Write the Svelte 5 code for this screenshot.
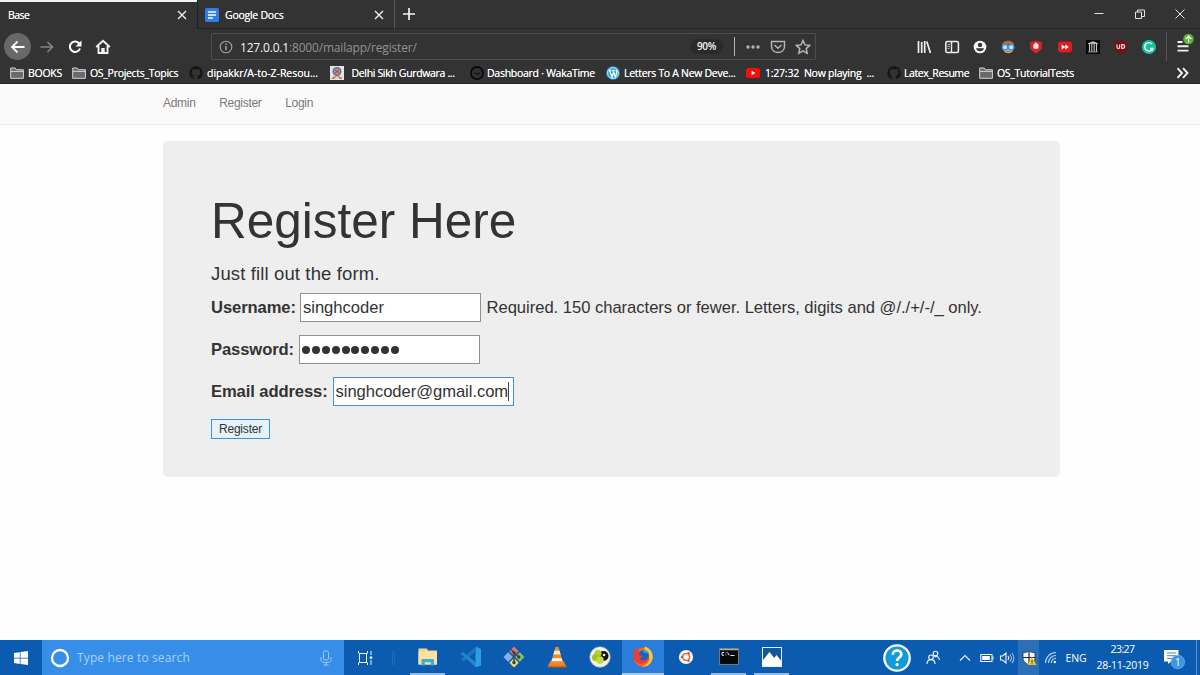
<script>
  const bookmarks = [
    { icon: 'folder', text: 'BOOKS', gap: 4, ls: -0.25 },
    { icon: 'folder', text: 'OS_Projects_Topics', gap: 4, ls: -0.3 },
    { icon: 'github', text: 'dipakkr/A-to-Z-Resou...', gap: 4, ls: -0.03 },
    { icon: 'sikh', text: 'Delhi Sikh Gurdwara ...', gap: 8, ls: -0.34 },
    { icon: 'waka', text: 'Dashboard · WakaTime', gap: 3, ls: -0.27 },
    { icon: 'wp', text: 'Letters To A New Deve...', gap: 4, ls: -0.3 },
    { icon: 'yt', text: '1:27:32  Now playing  ...', gap: 5, ls: -0.23 },
    { icon: 'github', text: 'Latex_Resume', gap: 3, ls: -0.45 },
    { icon: 'folder', text: 'OS_TutorialTests', gap: 4, ls: -0.3 }
  ];
  const tools = ['library', 'sidebar', 'account', 'face', 'shield', 'forward', 'archive', 'ublock', 'grammar'];
  const apps = [
    { icon: 'explorer', open: true },
    { icon: 'code' },
    { icon: 'git' },
    { icon: 'vlc' },
    { icon: 'eye' },
    { icon: 'firefox', active: true },
    { icon: 'ubuntu' },
    { icon: 'terminal', open: true },
    { icon: 'photos', open: true }
  ];
</script>

{#snippet bookmarkIcon(name)}
  <svg width="14" height="14" viewBox="0 0 14 14">
    {#if name === 'folder'}
      <path d="M.7 12.300V2h4.500l1 1.700h7.200v8.600z" fill="#69696b" stroke="#d4d4d4" />
      <path d="M1 5.400h12.200" stroke="#d4d4d4" />
    {:else if name === 'github'}
      <path d="M7 .3a6.700 6.700 0 0 0-2.200 13c.4.1.5-.1.5-.3v-1.300c-1.900.4-2.300-.8-2.300-.8-.3-.8-.7-1-.7-1-.6-.4 0-.4 0-.4.7 0 1 .7 1 .7.6 1.100 1.600.8 2 .6 0-.5.2-.8.4-.9-1.500-.2-3-.8-3-3.400 0-.7.2-1.300.6-1.800 0-.2-.3-.9.1-1.800 0 0 .6-.2 1.900.7a6 6 0 0 1 3.400 0c1.300-.9 1.900-.7 1.900-.7.4.9.1 1.600.1 1.800.4.5.6 1.100.6 1.800 0 2.600-1.500 3.200-3 3.400.2.2.5.6.5 1.300V13c0 .2.1.4.5.3A6.700 6.700 0 0 0 7 .3z" fill="#161617" />
    {:else if name === 'sikh'}
      <rect width="14" height="14" fill="#e6e3e3" />
      <circle cx="7" cy="5.500" r="4.500" fill="#4d73b8" />
      <circle cx="7" cy="5.500" r="3" fill="#d98b62" />
      <path d="M5 4l4 3M9 4L5 7" stroke="#934a3e" />
      <path d="M1.500 13c1-4 10-4 11 0z" fill="#c7765d" />
      <path d="M4 13l3-3 3 3z" fill="#e7d4bd" />
    {:else if name === 'waka'}
      <circle cx="7" cy="7" r="6.100" fill="#303031" stroke="#080808" stroke-width="1.700" />
      <path d="M4 6.500l1.700 1.900L7 7l1.200 1.400L10.500 5.500" fill="none" stroke="#0b0b0b" />
    {:else if name === 'wp'}
      <circle cx="7" cy="7" r="6.800" fill="#21a1df" />
      <circle cx="7" cy="7" r="5.400" fill="none" stroke="#e9f6fd" stroke-width=".8" />
      <path d="M2.700 4.300h2.700M6 4.300h3M3.500 4.500L6 11 7.500 6.500M7 4.500L9.300 11l1.600-5-1-2" fill="none" stroke="#fff" stroke-width="1.300" />
    {:else if name === 'yt'}
      <rect y="2" width="14" height="10" rx="2.500" fill="#f80d08" />
      <path d="M5.600 4.700L9.400 7 5.600 9.300z" fill="#fff" />
    {/if}
  </svg>
{/snippet}

{#snippet toolIcon(name)}
  <svg width="16" height="16" viewBox="0 0 16 16">
    {#if name === 'library'}
      <path d="M2.500 2v12M5.700 3v11M8.700 2v12M10.800 2.500l3.600 11.500" stroke="#efefef" stroke-width="1.700" />
    {:else if name === 'sidebar'}
      <rect x="1.800" y="2.500" width="12.600" height="11" rx="1.600" fill="none" stroke="#ededed" stroke-width="1.600" />
      <path d="M7.500 3v10" stroke="#ededed" stroke-width="1.400" />
      <path d="M3.500 5.400h2.500M3.500 7.400h2.500M3.500 9.400h2" stroke="#ccc" stroke-width=".9" />
    {:else if name === 'account'}
      <circle cx="8" cy="8" r="6.300" fill="#f4f4f4" />
      <circle cx="8" cy="5.900" r="2.200" fill="#333" />
      <path d="M4 9.300h8c-.6 3.900-7.400 3.900-8 0z" fill="#333" />
    {:else if name === 'face'}
      <path d="M3 6h10.500l-.6 5.500c-1.300 3.700-8 3.700-9.300 0z" fill="#dda565" />
      <path d="M2.300 6.500C1.500.3 14.700.3 13.900 6.500l-3-1.500-4 .6z" fill="#a8703a" />
      <circle cx="5" cy="8.200" r="2.700" fill="#c5e6fc" stroke="#3f92dd" stroke-width="1.400" />
      <circle cx="11.200" cy="8.200" r="2.700" fill="#c5e6fc" stroke="#3f92dd" stroke-width="1.400" />
      <path d="M6.500 12.500h3.200" stroke="#9d5e38" stroke-width=".8" />
    {:else if name === 'shield'}
      <path d="M8 1.800l5.900 1.500v4.200c0 3.200-3.100 5.300-5.900 6.900-2.800-1.600-5.900-3.700-5.900-6.900V3.300z" fill="#dc232b" />
      <path d="M5.200 5.600h1V4.300h1v-.7h1.200v.7h1v.8h1.100v4L9.600 10H6.800L5.200 8.800z" fill="#fbdedd" />
    {:else if name === 'forward'}
      <rect x="1" y="2.500" width="14" height="11" rx="3" fill="#dc1d24" />
      <path d="M4.700 5.500l3.600 2.500-3.600 2.500zM8.300 5.500l3.600 2.500-3.600 2.500z" fill="#fff" />
    {:else if name === 'archive'}
      <rect x="1" y="1" width="14" height="14" fill="#080808" />
      <path d="M3.200 4.600L8 2.700l4.800 1.900zM3.200 12.900h9.600" stroke="#ccc" fill="#ccc" stroke-width=".8" />
      <path d="M4.500 5v7.500M6.800 5v7.500M9.200 5v7.500M11.500 5v7.500" stroke="#c5c5c5" stroke-width="1.100" />
    {:else if name === 'ublock'}
      <path d="M8 .9c2 1.500 4.200 1.700 6.300 1.800v4.900c0 3.700-3.200 5.700-6.300 7.300-3.100-1.600-6.300-3.600-6.300-7.300V2.700C3.800 2.600 6 2.400 8 .9z" fill="#7f0d12" />
      <path d="M4 5.500v2.500q0 1.500 1.300 1.500T6.600 8V5.500M8.700 5.700v3.700h1c2.600 0 2.600-3.700 0-3.700z" fill="none" stroke="#f1dfe0" stroke-width="1.200" />
    {:else if name === 'grammar'}
      <circle cx="8" cy="8" r="7.100" fill="#15c39a" />
      <path d="M11 5A4.200 4.200 0 1 0 11.800 9.500H9M11.600 9v2.500" fill="none" stroke="#fff" stroke-width="1.400" />
    {/if}
  </svg>
{/snippet}

{#snippet appIcon(name)}
  <svg width="24" height="24" viewBox="0 0 24 24">
    {#if name === 'explorer'}
      <path d="M2.500 3.500h8.500l1 2h9v14H2.500z" fill="#f2d88a" />
      <path d="M2.500 6.500H21v13H2.500z" fill="#fbe49a" />
      <path d="M5.500 20.500V14H18v6.500h-3.200v-3.200H8.700v3.200z" fill="#3cacdc" />
    {:else if name === 'code'}
      <path d="M16.500 1.500L22 4v16.500L16.500 22.500z" fill="#2ba0e0" />
      <path d="M17 6.500L4.500 16.500 1.500 14.500 17 2z" fill="#1879bd" />
      <path d="M17 17.500L4 7 1.500 8.500 17 22.500z" fill="#1c8ace" />
    {:else if name === 'git'}
      <path d="M12 1.500l4.700 4.700L12 10.900 7.300 6.200z" fill="#e9736a" />
      <path d="M6.200 7.300l4.700 4.700-4.700 4.700L1.500 12z" fill="#86b1ea" />
      <path d="M17.800 7.300l4.700 4.700-4.700 4.700-4.700-4.700z" fill="#83c562" />
      <path d="M12 13.100l4.700 4.700-4.700 4.700-4.700-4.700z" fill="#f4d964" />
      <path d="M8.500 4l3.500 3.500v10M12 8l5 4" fill="none" stroke="#464d54" stroke-width="1.600" />
      <circle cx="12" cy="7.500" r="1.600" fill="#3a3f45" /><circle cx="16.800" cy="12" r="1.700" fill="#3a3f45" /><circle cx="12" cy="17.500" r="1.700" fill="#3a3f45" />
    {:else if name === 'vlc'}
      <path d="M5.500 16h13l3 6H2.500z" fill="#ee8220" />
      <path d="M10.500 2h3L18 17.500c-2 2-10 2-12 0z" fill="#f18a27" />
      <path d="M9.500 5.800h5l1.100 3.700H8.400zM7.300 13.200h9.400l.9 3H6.400z" fill="#f1f1ee" />
      <path d="M3 21h18v1.500H3z" fill="#c96310" />
    {:else if name === 'eye'}
      <circle cx="12" cy="12" r="10.300" fill="#eff0e9" stroke="#aaa" stroke-width=".6" />
      <circle cx="15.500" cy="11" r="5" fill="#141512" />
      <circle cx="10" cy="8.500" r="3.500" fill="#b9cf26" />
      <circle cx="7.500" cy="12.500" r="3.500" fill="#a9c01b" />
      <circle cx="12" cy="15" r="3.700" fill="#c4d83a" />
      <circle cx="16" cy="10" r="1.300" fill="#fff" />
    {:else if name === 'firefox'}
      <circle cx="12" cy="12.300" r="9.500" fill="#f2652c" />
      <path d="M14 1.500c6 2 9.500 8.500 7 14-2 4.600-6.500 6.700-10 6.200 7-2 9-8 5-13-2-2.300-3.500-4-2-7.200z" fill="#fbc833" />
      <circle cx="12.500" cy="10.700" r="5.500" fill="#1b63bb" />
      <path d="M3.800 4C6 4.700 8 5 9.500 7c-2.200 1.300-1.500 3-.2 3.500l2.600.5c-.7 2-2.600 1.600-3.200 2.200 1.700 3 6.300 2.600 8.800-.4 0 6.500-12 9.400-14.700.5C2 10 2.500 6.500 3.800 4z" fill="#ea3e38" />
      <path d="M12 5c3.500-.6 5.600 1.400 6 4.600-1.600-1.600-3.700-1.700-5-1.500z" fill="#2d9edb" />
    {:else if name === 'ubuntu'}
      <circle cx="12" cy="12" r="7.100" fill="#f7f7f5" />
      <circle cx="12.200" cy="12" r="3.400" fill="none" stroke="#d0664a" stroke-width="1.400" />
      <path d="M12.200 12L7.800 12M12.200 12l2.500-4M12.200 12l2.500 4" stroke="#f7f7f5" stroke-width=".8" />
      <circle cx="8" cy="12" r="1.200" fill="#c75636" /><circle cx="14.500" cy="8.200" r="1.200" fill="#c75636" /><circle cx="14.500" cy="15.800" r="1.200" fill="#c75636" />
    {:else if name === 'terminal'}
      <rect x="2.500" y="3.500" width="19" height="16" fill="#070808" stroke="#6f777d" />
      <path d="M3 4.500h18" stroke="#a9b0b5" stroke-width="1.500" />
      <path d="M7 7.500H5v2.700h2M9 7.500v.8M9 9.500v.8M10.500 7.300l1.700 3M13.500 10.500h4" fill="none" stroke="#e8e8e8" />
    {:else if name === 'photos'}
      <rect x="2.500" y="2.500" width="19" height="19" fill="#14569b" stroke="#e6f0fa" />
      <path d="M3 20v-5l6.500-8 4.700 6 2.300-3L21 15.500V21H3z" fill="#fff" />
    {/if}
  </svg>
{/snippet}

<div class="screen">
  <header class="browser">
    <div class="tabs">
      <div class="tab active"><span class="title base">Base</span><svg class="x" width="10" height="10" viewBox="0 0 10 10"><path d="M1 1l8 8M9 1L1 9" /></svg></div>
      <div class="tab second">
        <svg width="14" height="14" viewBox="0 0 14 14"><rect width="14" height="14" rx="1.500" fill="#2f7de9" /><path d="M3 4h8M3 7h8M3 10h5" stroke="#fff" stroke-width="1.500" /></svg>
        <span class="title docs">Google Docs</span>
        <svg class="x" width="10" height="10" viewBox="0 0 10 10"><path d="M1 1l8 8M9 1L1 9" /></svg>
      </div>
      <div class="plus"><svg width="14" height="14" viewBox="0 0 14 14"><path d="M7 1v12M1 7h12" stroke="#f3f3f3" stroke-width="1.700" /></svg></div>
      <div class="window-buttons">
        <svg width="12" height="12" viewBox="0 0 12 12"><path d="M1.500 5.500h9" /></svg>
        <svg width="12" height="12" viewBox="0 0 12 12"><path d="M1.500 4h6v6.500h-6zM3.500 4V2h7v6.500h-3" /></svg>
        <svg width="12" height="12" viewBox="0 0 12 12"><path d="M1.500 1.500l9 9M10.500 1.500l-9 9" /></svg>
      </div>
    </div>
    <div class="nav">
      <div class="nav-buttons">
        <div class="back"><svg width="16" height="16" viewBox="0 0 16 16"><path d="M14.500 8H2M7.500 2.500L2 8l5.500 5.500" fill="none" stroke="#fff" stroke-width="1.800" /></svg></div>
        <svg width="16" height="16" viewBox="0 0 16 16"><path d="M1.500 8h12M8.500 3l5 5-5 5" fill="none" stroke="#858586" stroke-width="1.600" /></svg>
        <svg width="16" height="16" viewBox="0 0 16 16"><path d="M12.300 4.700A5.200 5.200 0 1 0 13 9.500" fill="none" stroke="#fff" stroke-width="2" /><path d="M14.500 1.500v6h-6z" fill="#fff" /></svg>
        <svg width="16" height="16" viewBox="0 0 16 16"><path d="M1.200 8L8 1.700 14.800 8M3.500 7v7h9V7" fill="none" stroke="#f2f2f2" stroke-width="1.900" /><path d="M6.300 14V9h3.400v5z" fill="#f2f2f2" /></svg>
      </div>
      <div class="address">
        <svg width="14" height="14" viewBox="0 0 14 14"><circle cx="7" cy="7" r="5.800" fill="none" stroke="#a5a5a6" stroke-width="1.100" /><path d="M7 6v4.300M7 3.500V5" stroke="#b5b5b6" stroke-width="1.300" /></svg>
        <span class="url"><b>127.0.0.1</b>:8000/mailapp/register/</span>
        <span class="zoom">90%</span>
        <i class="bar"></i>
        <svg class="dots" width="16" height="16" viewBox="0 0 16 16"><circle cx="3" cy="8" r="1.700" /><circle cx="8" cy="8" r="1.700" /><circle cx="13" cy="8" r="1.700" /></svg>
        <svg class="pocket" width="16" height="16" viewBox="0 0 16 16"><path d="M1.500 2.500h13v4.700c0 8.300-13 8.300-13 0zM4.500 6L8 9.300 11.500 6" /></svg>
        <svg class="star" width="16" height="16" viewBox="0 0 16 16"><path d="M8 1.500l2 4.400 4.700.5-3.500 3.200 1 4.700L8 11.900l-4.200 2.400 1-4.700L1.300 6.400 6 5.900z" /></svg>
      </div>
      <div class="tools">
        {#each tools as tool}<div class="tool">{@render toolIcon(tool)}</div>{/each}
      </div>
      <div class="menu"><svg width="20" height="24" viewBox="0 0 20 24"><path d="M2.500 11h5M2.500 15.300h11M2.500 19.600h11" stroke="#f0f0f0" stroke-width="1.900" /><circle cx="13.500" cy="8" r="5.300" fill="#58b530" /><path d="M13.500 11.500V5.500M10.700 8l2.800-2.800L16.300 8" fill="none" stroke="#fff" stroke-width="1.300" /></svg></div>
    </div>
    <div class="bookmarks">
      {#each bookmarks as item}
        <div class="bookmark" style:gap="{item.gap}px">{@render bookmarkIcon(item.icon)}<span style:letter-spacing="{item.ls}px">{item.text}</span></div>
      {/each}
      <svg class="more" width="13" height="12" viewBox="0 0 13 12"><path d="M1.500 1.200L6 6l-4.500 4.800M7 1.200L11.500 6 7 10.800" fill="none" stroke="#f1f1f1" stroke-width="1.900" /></svg>
    </div>
  </header>

  <nav class="site-nav"><span>Admin</span><span>Register</span><span>Login</span></nav>

  <main>
    <section class="jumbotron">
      <h1>Register Here</h1>
      <h2>Just fill out the form.</h2>
      <div class="row user"><label for="user">Username:</label><div class="field" id="user"><span>singhcoder</span></div><span class="help">Required. 150 characters or fewer. Letters, digits and @/./+/-/_ only.</span></div>
      <div class="row pass"><label for="pass">Password:</label><div class="field" id="pass">{#each Array(10) as _}<i class="dot"></i>{/each}</div></div>
      <div class="row mail"><label for="mail">Email address:</label><div class="field focus" id="mail"><span>singhcoder@gmail.com</span><i class="caret"></i></div></div>
      <button>Register</button>
    </section>
  </main>

  <footer class="taskbar">
    <div class="cell"><svg width="16" height="16" viewBox="0 0 16 16"><path d="M1 3l5.800-.8v5.500H1zM7.500 2.100L15 1v6.700H7.500zM1 8.400h5.800v5.500L1 13.100zM7.500 8.400H15v6.700l-7.500-1.100z" fill="#fff" /></svg></div>
    <div class="search">
      <svg width="20" height="20" viewBox="0 0 20 20"><circle cx="10" cy="10" r="8" fill="none" stroke="#fff" stroke-width="2.300" /></svg>
      <span>Type here to search</span>
      <svg class="mic" width="12" height="16" viewBox="0 0 12 16"><rect x="3.500" y="1" width="5" height="9" rx="1.500" /><path d="M1 7v3.500l2 2h6l2-2V7M6 12.500V15M3.500 15h5" /></svg>
    </div>
    <div class="cell"><svg width="16" height="16" viewBox="0 0 16 16"><path d="M1.500 1v2M10.500 1v2M1.500 3.500h9M1.500 12.500h9M2.500 3.500v9M9.500 3.500v9M1.500 13v2M10.500 13v2M14 1v4M14 10v5" stroke="#edf5fc" fill="none" /><path d="M14 6.500v2.200" stroke="#fff" stroke-width="2.400" /></svg></div>
    <div class="grip"><i></i><i></i></div>
    <div class="apps">
      {#each apps as app}<div class="app" class:open={app.open} class:active={app.active}>{@render appIcon(app.icon)}</div>{/each}
    </div>
    <div></div>
    <div class="cell"><svg width="30" height="30" viewBox="0 0 30 30"><circle cx="15" cy="15" r="12.700" fill="#129bdb" stroke="#fff" stroke-width="2.300" /><path d="M10.800 11.700c.1-5.600 8.700-5.500 8.500-.3-.1 3.200-4.200 3-4.200 6.600" fill="none" stroke="#fff" stroke-width="2.700" /><circle cx="15.100" cy="21.600" r="1.700" fill="#fff" /></svg></div>
    <div class="cell"><svg class="line" width="16" height="16" viewBox="0 0 16 16"><circle cx="10.500" cy="3.500" r="2.300" /><circle cx="6" cy="7.300" r="2.300" /><path d="M2 14c0-5.800 8-5.800 8 0M9.300 7c2.700-1.700 5 .5 5 3" /></svg></div>
    <div class="cell"><svg class="line" width="12" height="12" viewBox="0 0 12 12"><path d="M1 8.500l5-5 5 5" /></svg></div>
    <div class="cell"><svg width="14" height="10" viewBox="0 0 14 10"><rect x=".8" y="1.500" width="11.200" height="7" fill="none" stroke="#fff" /><path d="M2.200 3h7.600v4H2.200zM12.500 3.500h1v3h-1z" fill="#fff" /></svg></div>
    <div class="cell sound"><svg class="line" width="16" height="14" viewBox="0 0 16 14"><path d="M1.500 5h2.200L7 2v10L3.700 9H1.500zM9 5q1.500 2 0 4" /><path d="M10.900 3.500q3 3.500 0 7M12.900 2q4 5 0 10" opacity=".65" /></svg></div>
    <div class="cell defender"><svg width="16" height="18" viewBox="0 0 16 18"><path d="M8 2c2 1.300 4 1.700 6 1.700V9c0 3.500-3 5.600-6 7-3-1.400-6-3.500-6-7V3.700C4 3.700 6 3.300 8 2z" fill="#f6f6f6" stroke="#222" stroke-width=".7" /><path d="M8 2.500v13M2 8.500h12" stroke="#222b36" stroke-width="1.200" /><path d="M11 8l4.500 8h-9z" fill="#f8c32a" /><path d="M11 11v2.500M11 14.300v1" stroke="#5d3d03" /></svg></div>
    <div class="cell"><svg class="line" width="14" height="14" viewBox="0 0 14 14"><g opacity=".8"><path d="M1.500 12A10.500 10.500 0 0 1 12 1.500M4.500 12A7.500 7.500 0 0 1 12 4.500M7.300 12A4.700 4.700 0 0 1 12 7.300" /></g><circle cx="10.800" cy="11" r="1.200" fill="#fff" stroke="none" /></svg></div>
    <div class="cell lang">ENG</div>
    <div class="clock"><span class="time">23:27</span><span class="date">28-11-2019</span></div>
    <div class="cell"><svg width="24" height="24" viewBox="0 0 24 24"><path d="M1 4h14.500v11.500H8L5 18v-2.500H1z" fill="#fff" /><path d="M4 7h9M4 9.700h9M4 12.400h5" stroke="#4b81b9" /><circle cx="14.800" cy="16" r="6.800" fill="#3c95e5" stroke="#74b5ee" stroke-width=".7" /><text x="14.800" y="19.700" text-anchor="middle" font-size="10.500" fill="#fff" font-family="Open Sans, sans-serif">1</text></svg></div>
    <div class="edge"></div>
  </footer>
</div>

<style>
  :global(body) { margin: 0; overflow: hidden; background: #fff; }
  .screen { width: 1200px; height: 675px; display: grid; grid-template-rows: 84px 41px 515px 35px; background: #fefefe; font-family: "Open Sans", sans-serif; color: #333; }
  svg { display: block; flex: none; }
  .browser { display: grid; grid-template-rows: 29px 35px 18px; background: #333334; color: #f4f4f4; box-sizing: border-box; border-bottom: 1px solid #252525; overflow: hidden; }
  .tabs { display: grid; grid-template-columns: 197px 198px 28px 1fr; }
  .tab { display: flex; align-items: center; box-sizing: border-box; }
  .active.tab { border-top: 2px solid #f2f2f2; padding: 0 10px 1px 8px; justify-content: space-between; }
  .second { padding: 1px 10px 0 7px; border: solid #202021; border-width: 0 1px 1px; border-right-color: #58585a; }
  .second .title { margin-left: 6px; flex: 1; }
  .title { font-size: 10.500px; letter-spacing: -.25px; white-space: nowrap; text-shadow: 0 0 .4px #fff; }
  .base { letter-spacing: -.5px; }
  .x path { fill: none; stroke: #eee; stroke-width: 1.400; }
  .plus { display: flex; align-items: center; justify-content: center; border-bottom: 1px solid #262627; }
  .window-buttons { display: flex; justify-content: flex-end; align-items: center; gap: 28.500px; padding-right: 14px; border-bottom: 1px solid #262627; }
  .window-buttons path { fill: none; stroke: #e3e3e3; stroke-width: 1; }
  .nav { display: grid; grid-template-columns: 211px 605px 94px 256px 34px; align-items: center; }
  .nav-buttons { display: flex; align-items: center; gap: 12px; padding-left: 4px; }
  .back { width: 27px; height: 27px; border-radius: 50%; background: #68686a; display: flex; align-items: center; justify-content: center; margin-right: -4px; }
  .address { height: 27px; box-sizing: border-box; border: 1px solid #4c4c4e; border-radius: 1px; display: flex; align-items: center; padding: 0 4px 0 7px; }
  .url { flex: 1; margin: 1px 0 0 7px; font-size: 12px; letter-spacing: -.18px; color: #929293; }
  .url b { font-weight: 400; color: #f5f5f5; }
  .zoom { width: 33px; height: 15px; line-height: 15px; text-align: center; border-radius: 8px; background: #2a2a2b; font-size: 10px; letter-spacing: -.3px; font-weight: 600; }
  .bar { width: 1px; height: 19px; background: #b5b5b5; margin: 0 10px 0 11px; }
  .address .dots { fill: #b5b5b6; }
  .pocket, .star { margin-left: 9px; fill: none; stroke: #b5b5b6; stroke-width: 1.500; }
  .tools { grid-column: 4; display: flex; height: 29px; align-items: center; border-right: 1px solid #555557; margin-right: -1px; }
  .tool { width: 28.120px; display: flex; justify-content: center; flex: none; }
  .menu { grid-column: 5; padding-left: 9px; margin-top: -7px; }
  .bookmarks { display: grid; grid-template-columns: 62px 117px 140.500px 140.500px 136px 140px 141px 92px 197px 1fr; padding-left: 10px; align-items: center; }
  .bookmark { display: flex; align-items: center; height: 18px; }
  .bookmark span { font-size: 10.500px; line-height: 16px; white-space: pre; text-shadow: 0 0 .4px #fff; }
  .site-nav { background: #fafafa; border-bottom: 1px solid #e9e9e9; box-sizing: border-box; display: flex; gap: 23.700px; padding: 12px 0 0 163px; font: 12px/15px "Liberation Sans", sans-serif; letter-spacing: -.3px; color: #7b7b7b; }
  main { padding: 16px 140px 0 163px; font-family: "Liberation Sans", sans-serif; }
  .jumbotron { height: 336px; box-sizing: border-box; background: #eee; border-radius: 5px; padding: 52px 0 0 48px; }
  h1 { margin: 0; font-size: 49.500px; line-height: 56px; font-weight: 400; }
  h2 { margin: 14px 0 8px; font-size: 18.500px; line-height: 22px; font-weight: 400; letter-spacing: .13px; }
  .row { display: flex; align-items: center; height: 29px; margin-bottom: 13px; font-size: 16.600px; letter-spacing: -.03px; white-space: nowrap; }
  label { font-weight: 700; letter-spacing: -.1px; }
  .user label { width: 89px; }
  .pass label { width: 87.500px; }
  .mail label { width: 122px; }
  .field { width: 181px; height: 29px; box-sizing: border-box; border: 1px solid #919191; background: #fff; display: flex; align-items: center; padding-left: 2px; }
  .field.focus { border-color: #4a90d9; padding-left: 1.500px; letter-spacing: -.05px; }
  .help { margin-left: 5.500px; }
  .dot { width: 8px; height: 8px; border-radius: 50%; background: #333; margin: 1px 1.400px 0 .5px; }
  .caret { width: 1px; height: 19px; background: #444; }
  button { display: block; box-sizing: border-box; width: 59px; height: 20px; margin: 0; padding: 0; font: 12px/16px "Liberation Sans", sans-serif; letter-spacing: -.2px; color: #333; background: #e5f1fb; border: 1px solid #3995df; }
  .taskbar { display: grid; grid-template-columns: 42px 302px 42px 20px 387px 89px 30px 42px 22px 22px 20px 21px 24px 26px 67px 38px 1fr; background: #0b5cb1; color: #fff; }
  .cell { display: flex; align-items: center; justify-content: center; }
  .sound { padding-right: 2px; }
  .search { background: #378ee8; display: flex; align-items: center; padding: 0 12px 0 8px; font-size: 12px; color: #a9d2fa; }
  .search span { flex: 1; margin-left: 7px; letter-spacing: .13px; }
  .mic { fill: none; stroke: #9cc9f5; stroke-width: 1; }
  .grip { display: flex; align-items: center; gap: 1px; padding-left: 6px; }
  .grip i { width: 1px; height: 14px; background: #2469b6; }
  .apps { display: grid; grid-template-columns: repeat(9, 43px); }
  .app { display: flex; align-items: center; justify-content: center; border-bottom: 2px solid transparent; box-sizing: border-box; }
  .app svg { margin-top: 1px; }
  .app.open { margin: 0 4px; border-color: #8bbdf0; }
  .app.active { background: #2a7ed9; border-color: #9dccf7; margin-left: 1px; }
  .line { fill: none; stroke: #eef5fc; stroke-width: 1.100; }
  .defender { background: #2a6fb7; }
  .lang { font-size: 10.500px; letter-spacing: -.2px; }
  .clock { display: flex; flex-direction: column; align-items: center; font-size: 10.500px; line-height: 15.500px; padding-top: 2px; letter-spacing: -.3px; }
  .time { letter-spacing: -.6px; }
  .edge { border-left: 1px solid #5c93cd; margin-left: 2px; }
</style>
